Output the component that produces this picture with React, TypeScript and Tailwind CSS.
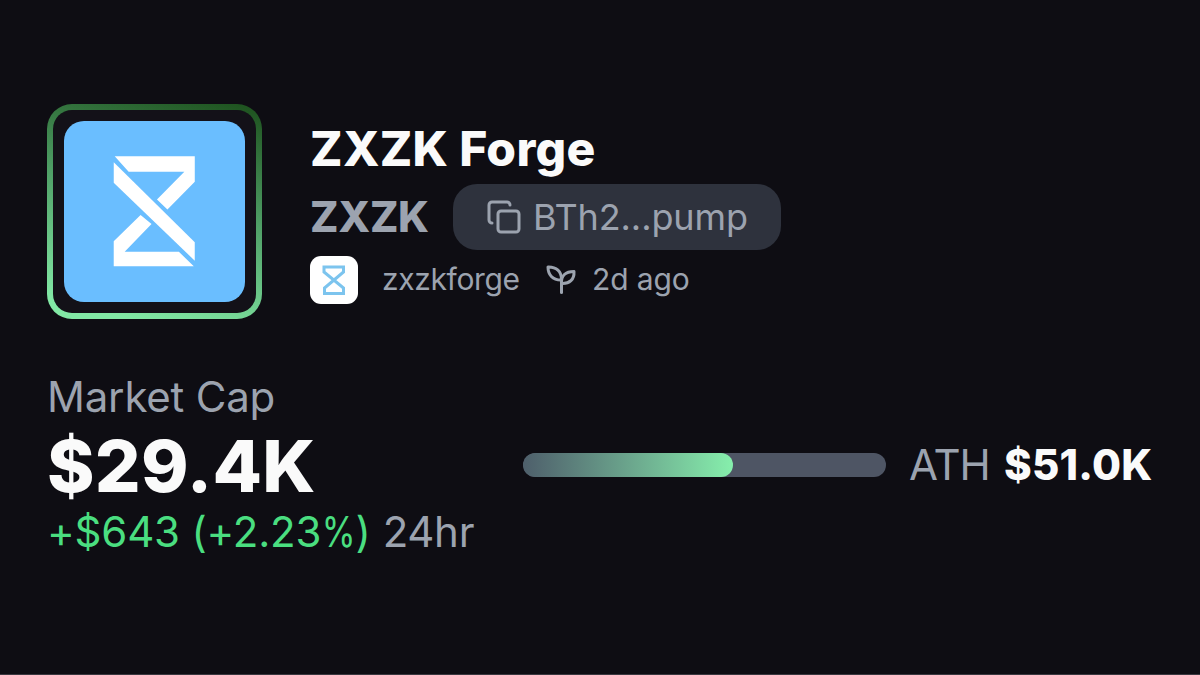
import { Copy } from "lucide-react";

const font = { fontFamily: 'Inter, "Liberation Sans", sans-serif' };

function Hourglass() {
  return (
    <svg viewBox="0 0 182 182" className="block h-full w-full" fill="#fff">
      <path d="M51 35.500H131.500V61L104 89L93.500 79L121 51H65Z" />
      <path d="M50 41.500L131.500 122V140.500L50 62Z" />
      <path d="M50 146V121L77 94.500L88 103.500L61 131.500H115.500L130.500 146Z" />
    </svg>
  );
}

function Avatar() {
  return (
    <div className="mt-px h-[215px] w-[215px] shrink-0 rounded-[25px] bg-linear-[15deg] from-[#82e8a5] from-8% via-[#4f9f66] via-55% to-[#1c4f1c] p-[6px]">
      <div className="h-full w-full rounded-[19px] bg-[#131118] p-[11px]">
        <div className="h-full w-full overflow-hidden rounded-[20px] bg-[#6abeff]">
          <Hourglass />
        </div>
      </div>
    </div>
  );
}

function SmallAvatar() {
  return (
    <div className="flex h-12 w-12 items-center justify-center rounded-[11px] bg-white">
      <svg width="24" height="30" viewBox="0 0 24 30" fill="none" stroke="#7cc4ee" strokeWidth="3">
        <path d="M2 2H21.500V7L2.500 23V28.500H21.500V23L2 7Z" />
      </svg>
    </div>
  );
}

function Sprout() {
  return (
    <svg width="30" height="30" viewBox="0 0 30 30" className="block" fill="none" stroke="#9ca3af" strokeWidth="3" strokeLinejoin="round" strokeLinecap="round">
      <path d="M15.500 27.500V16" />
      <path d="M15.500 18.500C15 10.500 19.500 6.500 28 6.500C28.500 14.500 23.500 19 15.500 18.500Z" />
      <path d="M15.500 14.500C15.500 6.500 10.500 1.800 2 2C2 9.500 6.500 15.300 15.500 15" />
    </svg>
  );
}

export default function App() {
  return (
    <main style={font} className="flex h-[675px] w-[1200px] flex-col overflow-hidden border-b border-[#3a3840] bg-[#0e0d13] text-[#9ca3af]">
      <header className="flex pt-[103px] pl-[47px]">
        <Avatar />
        <div className="flex flex-col pt-[21px] pl-[48px]">
          <h1 className="h-[60px] text-[48px] leading-[50px] font-extrabold tracking-[0.300px] whitespace-nowrap text-[#fafafa]">ZXZK Forge</h1>
          <div className="flex h-[66px] items-center">
            <span className="w-[143px] text-[42px] leading-[62px] font-extrabold tracking-[-0.300px]">ZXZK</span>
            <div className="flex h-[66px] w-[328px] items-center rounded-[24px] bg-[#2e323d] pl-[33px]">
              <Copy size={36} strokeWidth={2} />
              <span className="pl-[11px] text-[36px] leading-[64px] tracking-[-0.100px] whitespace-nowrap">BTh2...pump</span>
            </div>
          </div>
          <div className="flex items-center pt-[6px]">
            <SmallAvatar />
            <span className="w-[188px] pb-[3px] pl-[24px] text-[30px] leading-[44px] tracking-[-0.350px]">zxzkforge</span>
            <Sprout />
            <span className="pb-[3px] pl-[16px] text-[30px] leading-[44px] tracking-[-0.100px] whitespace-nowrap">2d ago</span>
          </div>
        </div>
      </header>
      <section className="flex items-start pt-[54px] pl-[47px]">
        <div className="w-[476px]">
          <div className="h-[55px] text-[42px] leading-[48px] tracking-[-0.200px]">Market Cap</div>
          <div className="h-[78px] text-[72px] leading-[76px] font-extrabold tracking-[0.300px] text-[#fafafa]">$29.4K</div>
          <div className="text-[42px] leading-[52px] whitespace-nowrap">
            <span className="text-[#4ade80]">
              <span className="tracking-[-0.200px]">+$643 </span>
              <span className="tracking-[-0.200px]">(+2.23</span>
              <span className="-mx-[3.500px] inline-block scale-x-[0.820]">%</span>)
            </span>{" "}
            <span className="tracking-[-0.300px]">24hr</span>
          </div>
        </div>
        <div className="flex items-center pt-[66px]">
          <div className="h-6 w-[363px] overflow-hidden rounded-full bg-[#4e5564]">
            <div className="h-full w-[210px] rounded-full bg-linear-to-r from-[#4e5f6b] to-[#86efac]" />
          </div>
          <div className="flex pl-[23px] text-[42px] leading-[52px] whitespace-nowrap">
            <span className="w-[95px] tracking-[-1px]">ATH</span>
            <span className="font-extrabold tracking-[0.200px] text-[#fafafa]">$51.0K</span>
          </div>
        </div>
      </section>
    </main>
  );
}
